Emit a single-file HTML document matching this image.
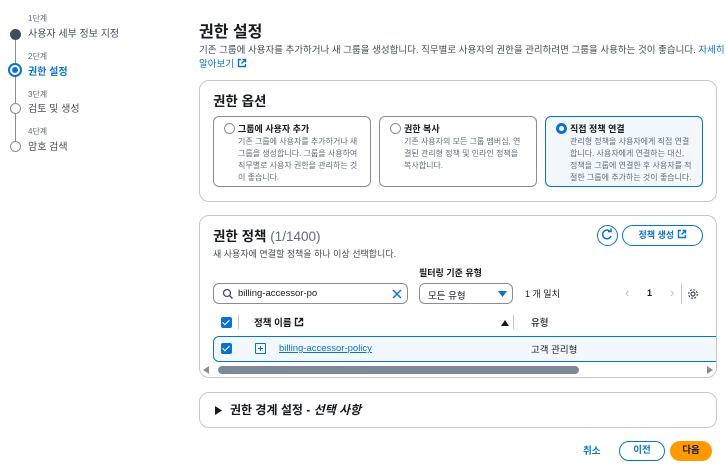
<!DOCTYPE html>
<html><head><meta charset="utf-8"><style>
*{box-sizing:border-box;margin:0;padding:0}
body{width:726px;height:471px;overflow:hidden;background:#fff;font-family:"Liberation Sans","Noto Sans CJK KR",sans-serif;color:#16191f;position:relative}
.a{position:absolute;white-space:nowrap}
.s{font-size:8px;color:#5f6b7a}
.st{font-size:10px;color:#414d5c}
.panel{position:absolute;border:1px solid #c6c6cd;border-radius:10px;background:#fff}
.card{position:absolute;border:1px solid #8c8c94;border-radius:6px;background:#fff}
.card .t{position:absolute;left:24px;top:5px;font-size:9px;font-weight:bold;color:#16191f}
.card .d{position:absolute;left:24px;top:19px;font-size:8px;line-height:12px;color:#5f6b7a;white-space:normal;width:122px;word-break:break-all}
.rad{position:absolute;left:10px;top:6px;width:11px;height:11px;border:1px solid #8c8c94;border-radius:50%}
.cb{position:absolute;width:11px;height:11px;background:#0972d3;border-radius:2px}
.cb:after{content:"";position:absolute;left:3px;top:1px;width:3px;height:6px;border:solid #fff;border-width:0 1.5px 1.5px 0;transform:rotate(45deg)}
</style></head><body>
<div class="a" style="left:15px;top:34px;width:1px;height:112px;background:#8c8c94"></div>
<div class="a" style="left:10px;top:29px;width:11px;height:11px;border-radius:50%;background:#414d5c"></div>
<div class="a" style="left:8px;top:63px;width:14px;height:14px;border-radius:50%;background:#fff;border:2px solid #0972d3"></div>
<div class="a" style="left:12px;top:67px;width:6px;height:6px;border-radius:50%;background:#0972d3"></div>
<div class="a" style="left:10px;top:103px;width:11px;height:11px;border-radius:50%;background:#fff;border:1px solid #8c8c94"></div>
<div class="a" style="left:10px;top:141px;width:11px;height:11px;border-radius:50%;background:#fff;border:1px solid #8c8c94"></div>
<div class="a s" style="left:28px;top:13px">1단계</div>
<div class="a st" style="left:28px;top:25px">사용자 세부 정보 지정</div>
<div class="a s" style="left:28px;top:51px">2단계</div>
<div class="a st" style="left:28px;top:63px;color:#0972d3;font-weight:bold">권한 설정</div>
<div class="a s" style="left:28px;top:89px">3단계</div>
<div class="a st" style="left:28px;top:100px">검토 및 생성</div>
<div class="a s" style="left:28px;top:126px">4단계</div>
<div class="a st" style="left:28px;top:138px">암호 검색</div>

<div class="a" style="left:199px;top:18px;font-size:16px;font-weight:bold">권한 설정</div>
<div class="a" style="left:199px;top:42px;font-size:9.5px;color:#414d5c">기존 그룹에 사용자를 추가하거나 새 그룹을 생성합니다. 직무별로 사용자의 권한을 관리하려면 그룹을 사용하는 것이 좋습니다. <span style="color:#0972d3">자세히</span></div>
<div class="a" style="left:199px;top:56px;font-size:9.5px;color:#0972d3">알아보기 <svg width="10" height="10" viewBox="0 0 10 10" style="vertical-align:-1px"><path d="M4 1.5H1.5v7h7V6M5.5 1.5h3v3M8.5 1.5 4.5 5.5" fill="none" stroke="#0972d3" stroke-width="1.4"/></svg></div>

<div class="panel" style="left:199px;top:80px;width:518px;height:122px">
 <div class="a" style="left:13px;top:9px;font-size:13.5px;font-weight:bold">권한 옵션</div>
 <div class="card" style="left:13px;top:35px;width:158px;height:71px"><div class="rad"></div><div class="t">그룹에 사용자 추가</div><div class="d">기존 그룹에 사용자를 추가하거나 새 그룹을 생성합니다. 그룹을 사용하여 직무별로 사용자 권한을 관리하는 것이 좋습니다.</div></div>
 <div class="card" style="left:179px;top:35px;width:158px;height:71px"><div class="rad"></div><div class="t">권한 복사</div><div class="d">기존 사용자의 모든 그룹 멤버십, 연결된 관리형 정책 및 인라인 정책을 복사합니다.</div></div>
 <div class="card" style="left:345px;top:35px;width:158px;height:71px;border:1.5px solid #0972d3;background:#f2f8fd"><div class="rad" style="border:3px solid #0972d3;background:#fff"></div><div class="t">직접 정책 연결</div><div class="d">관리형 정책을 사용자에게 직접 연결합니다. 사용자에게 연결하는 대신, 정책을 그룹에 연결한 후 사용자를 적절한 그룹에 추가하는 것이 좋습니다.</div></div>
</div>

<div class="panel" style="left:199px;top:215px;width:518px;height:163px;overflow:hidden">
 <div class="a" style="left:13px;top:9px;font-size:13.5px;font-weight:bold">권한 정책 <span style="font-weight:normal;color:#5f6b7a">(1/1400)</span></div>
 <div class="a" style="left:13px;top:31px;font-size:9px;color:#414d5c">새 사용자에 연결할 정책을 하나 이상 선택합니다.</div>
 <div class="a" style="left:397px;top:9px;width:21px;height:21px;border:1.5px solid #0972d3;border-radius:50%"><svg width="18" height="18" viewBox="0 0 18 18" style="position:absolute;left:0;top:0"><path d="M12.5 6A4.3 4.3 0 1 0 13 10" fill="none" stroke="#0972d3" stroke-width="1.5"/><path d="M10 5.5h3v-3" fill="none" stroke="#0972d3" stroke-width="1.5"/></svg></div>
 <div class="a" style="left:422px;top:9px;width:81px;height:21px;border:1.5px solid #0972d3;border-radius:11px;font-size:9px;font-weight:bold;color:#0972d3;text-align:center;line-height:18px">정책 생성 <svg width="10" height="10" viewBox="0 0 10 10" style="vertical-align:-1px"><path d="M4 1.5H1.5v7h7V6M5.5 1.5h3v3M8.5 1.5 4.5 5.5" fill="none" stroke="#0972d3" stroke-width="1.4"/></svg></div>
 <div class="a" style="left:219px;top:50px;font-size:9px;font-weight:bold">필터링 기준 유형</div>
 <div class="a" style="left:13px;top:67px;width:195px;height:21px;border:1px solid #8c8c94;border-radius:6px">
  <svg width="12" height="12" viewBox="0 0 12 12" style="position:absolute;left:8px;top:4px"><circle cx="5" cy="5" r="3.5" fill="none" stroke="#414d5c" stroke-width="1.3"/><path d="M7.5 7.5 10.5 10.5" stroke="#414d5c" stroke-width="1.3"/></svg>
  <div class="a" style="left:24px;top:4px;font-size:9.5px">billing-accessor-po</div>
  <svg width="10" height="10" viewBox="0 0 10 10" style="position:absolute;left:178px;top:5px"><path d="M1 1 9 9M9 1 1 9" stroke="#0972d3" stroke-width="1.5"/></svg>
 </div>
 <div class="a" style="left:219px;top:67px;width:94px;height:21px;border:1px solid #8c8c94;border-radius:6px">
  <div class="a" style="left:8px;top:4px;font-size:9.5px">모든 유형</div>
  <svg width="9" height="7" viewBox="0 0 9 7" style="position:absolute;left:78px;top:7px"><path d="M0 0H9L4.5 6Z" fill="#0972d3"/></svg>
 </div>
 <div class="a" style="left:325px;top:71px;font-size:9px">1 개 일치</div>
 <div class="a" style="left:425px;top:69px;font-size:13px;color:#b6bec9">‹</div>
 <div class="a" style="left:447px;top:72px;font-size:9px;font-weight:bold">1</div>
 <div class="a" style="left:470px;top:69px;font-size:13px;color:#b6bec9">›</div>
 <div class="a" style="left:481px;top:68px;width:1px;height:20px;background:#c6c6cd"></div>
 <svg width="12" height="12" viewBox="0 0 12 12" style="position:absolute;left:487px;top:72px"><circle cx="6" cy="6" r="2" fill="none" stroke="#414d5c" stroke-width="1.2"/><circle cx="6" cy="6" r="4.3" fill="none" stroke="#414d5c" stroke-width="1.2" stroke-dasharray="2 1.4"/></svg>
 <div class="cb" style="left:21px;top:101px"></div>
 <div class="a" style="left:38px;top:99px;width:1px;height:14px;background:#c6c6cd"></div>
 <div class="a" style="left:54px;top:99px;font-size:9.5px;font-weight:bold">정책 이름 <svg width="10" height="10" viewBox="0 0 10 10" style="vertical-align:-1px"><path d="M4 1.5H1.5v7h7V6M5.5 1.5h3v3M8.5 1.5 4.5 5.5" fill="none" stroke="#16191f" stroke-width="1.4"/></svg></div>
 <svg width="8" height="6" viewBox="0 0 8 6" style="position:absolute;left:301px;top:104px"><path d="M0 6H8L4 0Z" fill="#16191f"/></svg>
 <div class="a" style="left:313px;top:99px;width:1px;height:14px;background:#c6c6cd"></div>
 <div class="a" style="left:331px;top:99px;font-size:9.5px;font-weight:bold;color:#414d5c">유형</div>
 <div class="a" style="left:13px;top:120px;width:520px;height:26px;border:1.5px solid #0972d3;border-radius:6px;background:#f2f8fd"></div>
 <div class="cb" style="left:21px;top:127px"></div>
 <div class="a" style="left:55px;top:127px;width:11px;height:11px;border:1.3px solid #0972d3;border-radius:1px"></div>
 <div class="a" style="left:58px;top:132px;width:5px;height:1.3px;background:#0972d3"></div>
 <div class="a" style="left:60px;top:130px;width:1.3px;height:5px;background:#0972d3"></div>
 <div class="a" style="left:79px;top:127px;font-size:9.5px;color:#0972d3;text-decoration:underline">billing-accessor-policy</div>
 <div class="a" style="left:331px;top:126px;font-size:9.5px">고객 관리형</div>
 <svg width="6" height="8" viewBox="0 0 6 8" style="position:absolute;left:3px;top:150px"><path d="M6 0V8L0 4Z" fill="#8c8c94"/></svg>
 <div class="a" style="left:18px;top:150px;width:361px;height:8px;border-radius:4px;background:#7d8998"></div>
 <svg width="6" height="8" viewBox="0 0 6 8" style="position:absolute;left:507px;top:150px"><path d="M0 0V8L6 4Z" fill="#8c8c94"/></svg>
</div>

<div class="panel" style="left:199px;top:392px;width:518px;height:36px">
 <svg width="8" height="9" viewBox="0 0 8 9" style="position:absolute;left:15px;top:13px"><path d="M0 0V9L7 4.5Z" fill="#16191f"/></svg>
 <div class="a" style="left:30px;top:8px;font-size:12px;font-weight:bold">권한 경계 설정 - <i>선택 사항</i></div>
</div>

<div class="a" style="left:583px;top:443px;font-size:9.5px;font-weight:bold;color:#0972d3">취소</div>
<div class="a" style="left:619px;top:441px;width:46px;height:20px;border:1.5px solid #0972d3;border-radius:10px;font-size:9.5px;font-weight:bold;color:#0972d3;text-align:center;line-height:17px">이전</div>
<div class="a" style="left:670px;top:441px;width:42px;height:20px;background:#ff9900;border-radius:10px;font-size:9.5px;font-weight:bold;color:#16191f;text-align:center;line-height:20px">다음</div>
</body></html>
